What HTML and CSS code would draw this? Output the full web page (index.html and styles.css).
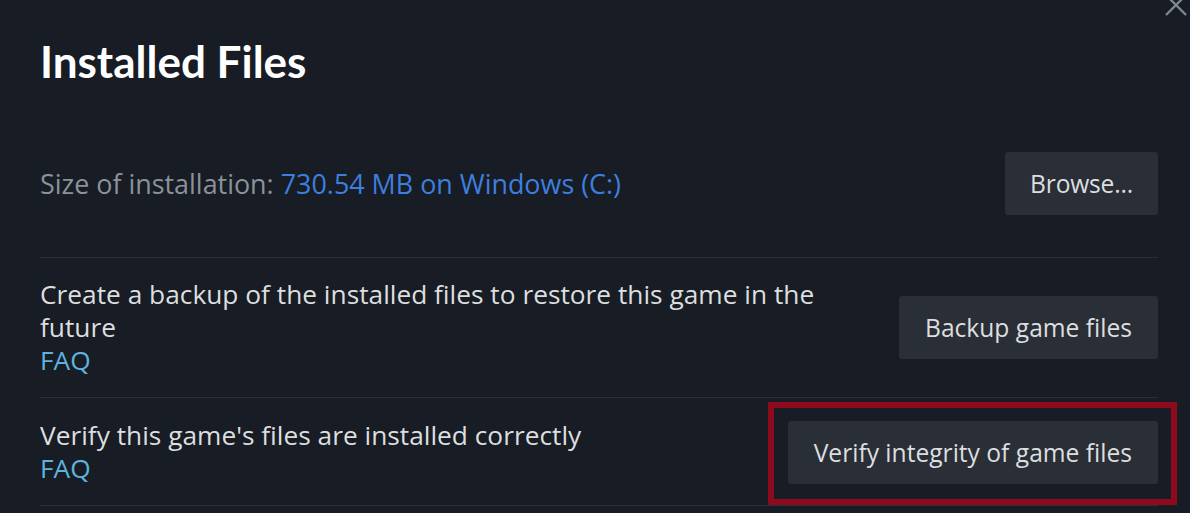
FILE: index.html
```html
<!DOCTYPE html>
<html lang="en">
<head>
<meta charset="utf-8">
<title>Installed Files</title>
<link rel="stylesheet" href="styles.css">
</head>
<body>
<div class="dialog">
  <button class="close" aria-label="Close">
    <svg width="24" height="24" viewBox="0 0 24 24"><path d="M2 2 L22 22 M22 2 L2 22" stroke="#7f868e" stroke-width="2.4" fill="none"/></svg>
  </button>
  <h1 class="title">Installed Files</h1>
  <div class="row row-size">
    <div class="text"><span class="label">Size of installation:</span> <span class="value">730.54 MB on Windows (C:)</span></div>
    <button class="btn btn-browse">Browse...</button>
  </div>
  <div class="row row-backup">
    <div class="text">
      <div>Create a backup of the installed files to restore this game in the future</div>
      <a class="faq" href="#">FAQ</a>
    </div>
    <button class="btn">Backup game files</button>
  </div>
  <div class="row row-verify">
    <div class="text">
      <div>Verify this game's files are installed correctly</div>
      <a class="faq" href="#">FAQ</a>
    </div>
    <div class="highlight">
      <button class="btn">Verify integrity of game files</button>
    </div>
  </div>
</div>
</body>
</html>
```

FILE: styles.css
```css
html, body {
  margin: 0;
  padding: 0;
  background: #181c24;
  overflow: hidden;
}
body {
  font-family: "Open Sans", "Noto Sans", sans-serif;
  color: #dcdedf;
}
.dialog {
  position: relative;
  padding: 0 32px 0 40px;
  height: 513px;
}
.close {
  position: absolute;
  top: -7px;
  right: 2px;
  background: none;
  border: 0;
  padding: 0;
  width: 24px;
  height: 24px;
}
.close svg { display: block; }
.title {
  margin: 0;
  padding-top: 36px;
  font-family: Lato, "Open Sans", sans-serif;
  font-size: 44px;
  line-height: 50px;
  font-weight: 700;
  color: #ffffff;
  height: 114px;
  box-sizing: border-box;
}
.row {
  display: flex;
  align-items: center;
  gap: 40px;
  border-bottom: 1px solid #2a2f39;
  font-size: 26.3px;
  line-height: 33px;
}
.row-size {
  padding: 38px 0 42px;
  font-size: 26.9px;
}
.row-backup {
  padding: 20px 0 20px;
}
.row-verify {
  padding: 21px 0 20px;
}
.text {
  flex: 1;
  min-width: 0;
}
.label { color: #8b929a; }
.value { color: #3d7fdf; }
.faq {
  color: #5db3dd;
  text-decoration: none;
}
.btn {
  font-family: inherit;
  font-size: 24.6px;
  color: #dcdedf;
  background: #2a2e37;
  border: 0;
  border-radius: 3px;
  height: 63px;
  padding: 0 26px;
  white-space: nowrap;
  display: block;
}
.btn-browse {
  padding: 0 25px;
  letter-spacing: -0.2px;
}
.highlight {
  position: relative;
}
.highlight::after {
  content: "";
  position: absolute;
  top: -19px;
  left: -20px;
  right: -19px;
  bottom: -21px;
  border: 6px solid #8d0b1d;
  pointer-events: none;
}
```
